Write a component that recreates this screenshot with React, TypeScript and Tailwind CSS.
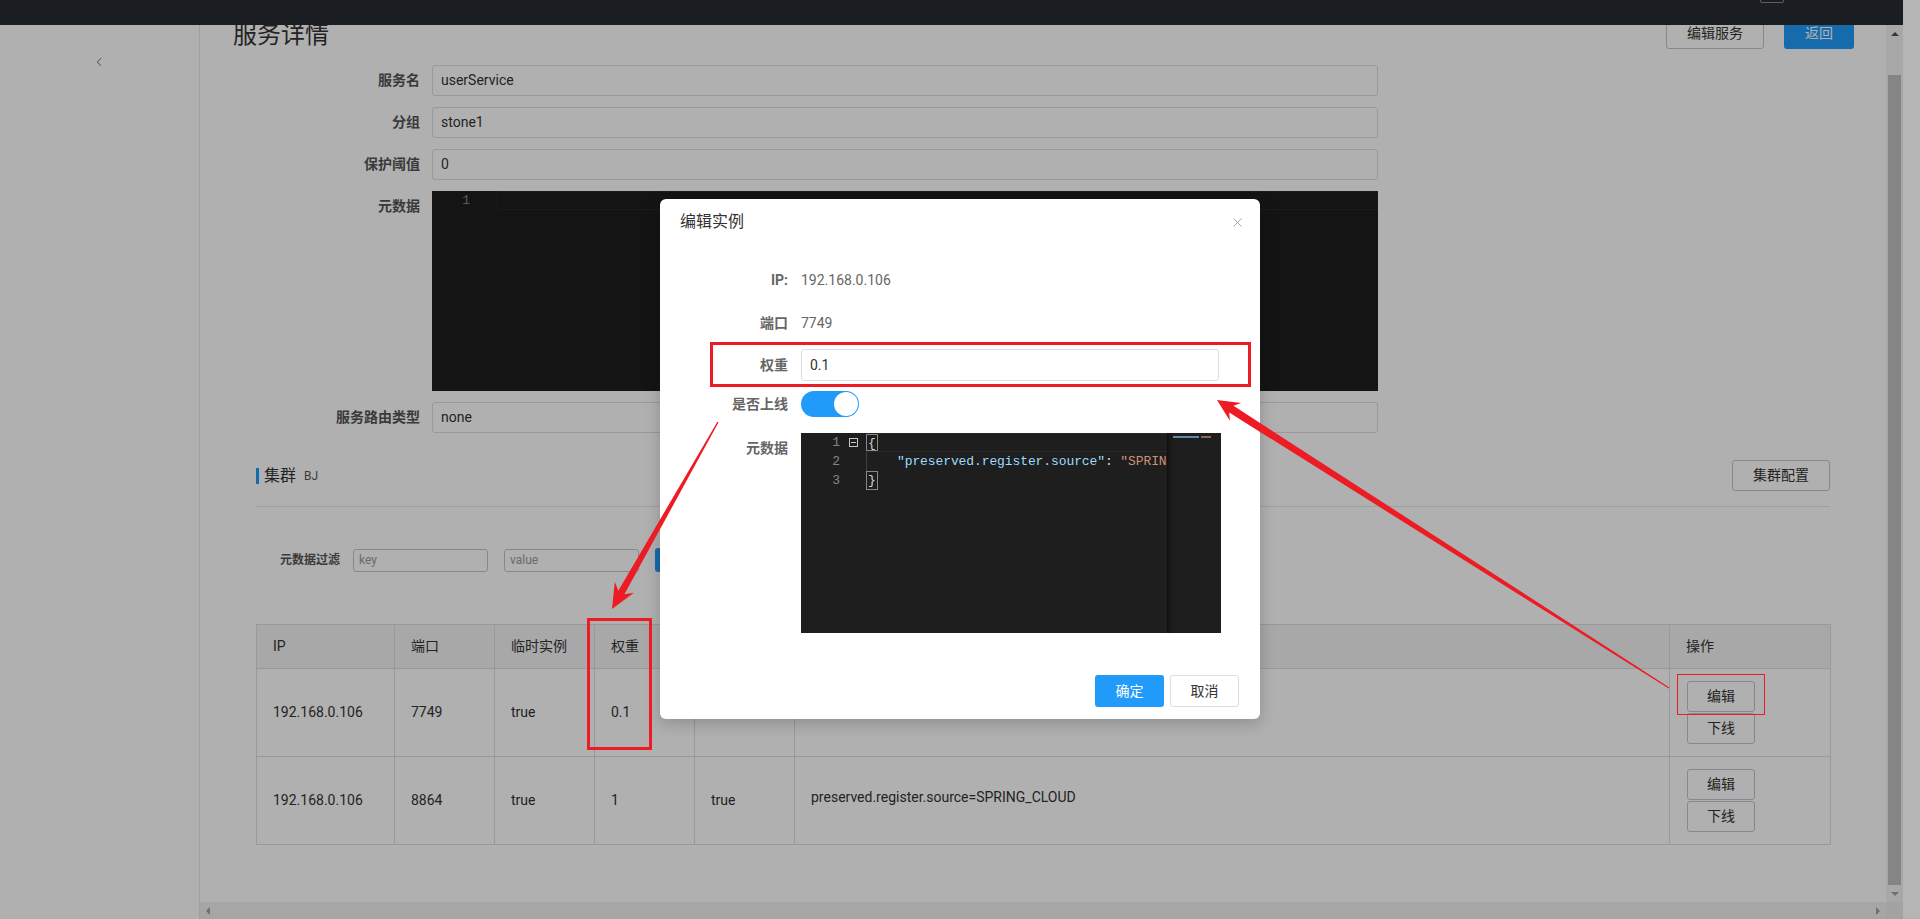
import { ChevronLeft, X } from 'lucide-react'

type Pt = [number, number]

// tapered red arrow like the ones drawn by screenshot tools
function arrowPoints(tail: Pt, tip: Pt, tailW: number, baseBack: number, baseW: number, wingBack: number, wingW: number) {
  const dx = tip[0] - tail[0]
  const dy = tip[1] - tail[1]
  const len = Math.hypot(dx, dy)
  const ux = dx / len
  const uy = dy / len
  const nx = -uy
  const ny = ux
  const at = (back: number, side: number): string =>
    `${(tip[0] - ux * back + nx * side).toFixed(1)},${(tip[1] - uy * back + ny * side).toFixed(1)}`
  return [
    at(len, tailW),
    at(baseBack, baseW),
    at(wingBack, wingW),
    `${tip[0]},${tip[1]}`,
    at(wingBack, -wingW),
    at(baseBack, -baseW),
    at(len, -tailW),
  ].join(' ')
}

const rows = [
  { ip: '192.168.0.106', port: '7749', eph: 'true', weight: '0.1', healthy: 'true', meta: 'preserved.register.source=SPRING_CLOUD' },
  { ip: '192.168.0.106', port: '8864', eph: 'true', weight: '1', healthy: 'true', meta: 'preserved.register.source=SPRING_CLOUD' },
]

function FormRow({ label, children, top = false }: { label: string; children: React.ReactNode; top?: boolean }) {
  return (
    <div className={`flex ${top ? 'items-start' : 'items-center'}`}>
      <label className="w-[164px] text-right text-[14px] leading-[31px] font-bold text-[#555]">{label}</label>
      <div className="ml-[12px]">{children}</div>
    </div>
  )
}

function TextBox({ value }: { value: string }) {
  return (
    <div className="w-[946px] h-[31px] border border-[#dcdee3] rounded-[3px] px-[8px] text-[14px] leading-[29px] text-[#333]">
      {value}
    </div>
  )
}

function ModalRow({ label, children, top = false }: { label: string; children: React.ReactNode; top?: boolean }) {
  return (
    <div className={`flex ${top ? 'items-start' : 'items-center h-[32px]'}`}>
      <span className="w-[128px] text-right text-[14px] leading-[30px] font-bold text-[#666]">{label}</span>
      <div className="ml-[13px]">{children}</div>
    </div>
  )
}

function CodeEditor() {
  return (
    <div className="relative w-[420px] h-[200px] bg-[#1e1e1e] overflow-hidden font-['Liberation_Mono',monospace] text-[13px] tracking-[-0.1px] leading-[19px]">
      <div className="flex">
        <div className="w-[39px] text-right text-[#858585]">
          <div>1</div>
          <div>2</div>
          <div>3</div>
        </div>
        <div className="w-[26px] flex justify-center pt-[5px]">
          <div className="w-[9px] h-[9px] border border-[#c5c5c5] flex items-center justify-center">
            <div className="w-[5px] h-px bg-[#c5c5c5]" />
          </div>
        </div>
        <div className="w-[301px] overflow-hidden whitespace-nowrap text-[#d4d4d4]">
          <div className="h-[19px] border-y border-[#282828] flex">
            <span className="border border-[#888] leading-[17px] px-px">{'{'}</span>
          </div>
          <div className="h-[19px] border-l border-[#404040] pl-[30px]">
            <span className="text-[#9cdcfe]">"preserved.register.source"</span>
            <span>: </span>
            <span className="text-[#ce9178]">"SPRING_CLOUD"</span>
          </div>
          <div className="h-[19px] flex">
            <span className="border border-[#888] leading-[17px] px-px">{'}'}</span>
          </div>
        </div>
        <div className="w-[54px] h-[200px] shadow-[inset_6px_0_6px_-6px_#000] pt-[3px] pl-[6px] flex gap-[2px] items-start">
          <div className="w-[26px] h-[2px] bg-[#5f8aa3]" />
          <div className="w-[10px] h-[2px] bg-[#8a6656]" />
        </div>
      </div>
    </div>
  )
}

function Modal() {
  return (
    <div className="absolute left-[660px] top-[199px] w-[600px] h-[520px] bg-white rounded-[6px] shadow-[0_4px_16px_rgba(0,0,0,0.2)] flex flex-col">
      <div className="h-[46px] flex items-center justify-between pl-[20px] pr-[15px]">
        <span className="text-[16px] text-[#333]">编辑实例</span>
        <X size={15} strokeWidth={1.4} className="text-[#999]" />
      </div>
      <div className="flex flex-col">
        <div className="mt-[19px]">
          <ModalRow label="IP:">
            <span className="text-[14px] text-[#666]">192.168.0.106</span>
          </ModalRow>
        </div>
        <div className="mt-[11px]">
          <ModalRow label="端口">
            <span className="text-[14px] text-[#666]">7749</span>
          </ModalRow>
        </div>
        <div className="mt-[10px]">
          <ModalRow label="权重">
            <div className="w-[418px] h-[32px] border border-[#dcdee3] rounded-[3px] px-[8px] text-[14px] leading-[30px] text-[#333]">0.1</div>
          </ModalRow>
        </div>
        <div className="mt-[7px]">
          <ModalRow label="是否上线">
            <div className="w-[58px] h-[26px] rounded-full bg-[#209bfa] flex justify-end items-center p-px">
              <div className="w-[24px] h-[24px] rounded-full bg-white" />
            </div>
          </ModalRow>
        </div>
        <div className="mt-[13px]">
          <ModalRow label="元数据" top>
            <CodeEditor />
          </ModalRow>
        </div>
      </div>
      <div className="mt-auto flex justify-end gap-[6px] pr-[21px] pb-[12px]">
        <button className="w-[69px] h-[32px] rounded-[3px] bg-[#209bfa] text-white text-[14px]">确定</button>
        <button className="w-[69px] h-[32px] rounded-[3px] border border-[#dcdee3] bg-white text-[#333] text-[14px]">取消</button>
      </div>
    </div>
  )
}

function Annotations() {
  return (
    <svg className="absolute inset-0 pointer-events-none" width="1920" height="919" viewBox="0 0 1920 919">
      <rect x="711.5" y="343.5" width="538" height="42" fill="none" stroke="#ed1c24" strokeWidth="3" />
      <rect x="588.5" y="619.5" width="62" height="129" fill="none" stroke="#ed1c24" strokeWidth="3" />
      <rect x="1677.5" y="674.5" width="87" height="40" fill="none" stroke="#ed1c24" strokeWidth="1" />
      <polygon points={arrowPoints([718, 422], [612, 609], 0.7, 19, 3.5, 25, 11)} fill="#ed1c24" />
      <polygon points={arrowPoints([1669, 688], [1217, 400], 0.6, 17, 4, 22, 10.5)} fill="#ed1c24" />
    </svg>
  )
}

export default function App() {
  return (
    <div className="relative w-[1920px] h-[919px] overflow-hidden flex bg-white font-[Roboto,'Noto_Sans_CJK_SC',sans-serif] text-[#333]">
      <div className="relative w-[1903px] h-full flex">
        <aside className="w-[200px] h-full shrink-0 border-r border-[#e6e6e6] bg-white">
          <div className="pt-[55px] pl-[92px] text-[#555]">
            <ChevronLeft size={14} strokeWidth={1.5} />
          </div>
        </aside>

        <div className="flex-1 flex flex-col min-w-0">
          <div className="flex flex-1 min-h-0">
            <main className="flex-1 min-w-0 pt-[17px]">
              <div className="flex items-center justify-between pl-[33px] pr-[32px] h-[32px]">
                <h1 className="text-[24px] leading-[32px] font-normal text-[#333] mt-[4px]">服务详情</h1>
                <div className="flex gap-[20px]">
                  <button className="w-[98px] h-[32px] border border-[#c4c6cf] rounded-[3px] bg-white text-[14px] text-[#333]">编辑服务</button>
                  <button className="w-[70px] h-[32px] rounded-[3px] bg-[#209bfa] text-[14px] text-white">返回</button>
                </div>
              </div>

              <div className="px-[56px]">
                <div className="mt-[16px] flex flex-col gap-[11px]">
                  <FormRow label="服务名"><TextBox value="userService" /></FormRow>
                  <FormRow label="分组"><TextBox value="stone1" /></FormRow>
                  <FormRow label="保护阈值"><TextBox value="0" /></FormRow>
                  <FormRow label="元数据" top>
                    <div className="w-[946px] h-[200px] bg-[#1e1e1e] flex font-['Liberation_Mono',monospace] text-[13px] leading-[17px]">
                      <div className="w-[38px] text-right text-[#858585] pt-px">1</div>
                      <div className="w-[27px]" />
                      <div className="flex-1 h-[19px] border border-[#282828]" />
                    </div>
                  </FormRow>
                  <FormRow label="服务路由类型"><TextBox value="none" /></FormRow>
                </div>

                <div className="mt-[27px] pb-[15px] border-b border-[#e6e6e6] flex items-center justify-between">
                  <div className="flex items-center">
                    <div className="w-[3px] h-[16px] bg-[#209bfa]" />
                    <span className="ml-[5px] text-[16px] text-[#333]">集群</span>
                    <span className="ml-[8px] text-[12px] text-[#555]">BJ</span>
                  </div>
                  <button className="w-[98px] h-[31px] border border-[#c4c6cf] rounded-[3px] bg-white text-[14px] text-[#333]">集群配置</button>
                </div>

                <div className="mt-[41px] pl-[24px] flex items-center gap-[16px]">
                  <span className="text-[12px] font-bold text-[#555] mr-[-3px]">元数据过滤</span>
                  <div className="w-[135px] h-[23px] border border-[#c4c6cf] rounded-[3px] px-[5px] text-[12px] leading-[21px] text-[#999]">key</div>
                  <div className="w-[135px] h-[23px] border border-[#c4c6cf] rounded-[3px] px-[5px] text-[12px] leading-[21px] text-[#999]">value</div>
                  <button className="w-[60px] h-[24px] rounded-[3px] bg-[#209bfa] text-[12px] text-white">查询</button>
                </div>

                <table className="mt-[52px] w-[1574px] table-fixed border-collapse text-[14px] text-[#333]">
                  <colgroup>
                    <col className="w-[138px]" />
                    <col className="w-[100px]" />
                    <col className="w-[100px]" />
                    <col className="w-[100px]" />
                    <col className="w-[100px]" />
                    <col className="w-[875px]" />
                    <col className="w-[161px]" />
                  </colgroup>
                  <thead>
                    <tr className="h-[44px] bg-[#f3f3f3]">
                      {['IP', '端口', '临时实例', '权重', '健康状态', '元数据', '操作'].map((h) => (
                        <th key={h} className="border border-[#dcdee3] px-[16px] text-left font-normal">{h}</th>
                      ))}
                    </tr>
                  </thead>
                  <tbody>
                    {rows.map((r) => (
                      <tr key={r.port} className="h-[88px]">
                        <td className="border border-[#dcdee3] px-[16px]">{r.ip}</td>
                        <td className="border border-[#dcdee3] px-[16px]">{r.port}</td>
                        <td className="border border-[#dcdee3] px-[16px]">{r.eph}</td>
                        <td className="border border-[#dcdee3] px-[16px]">{r.weight}</td>
                        <td className="border border-[#dcdee3] px-[16px]">{r.healthy}</td>
                        <td className="border border-[#dcdee3] px-[16px] pb-[6px]">{r.meta}</td>
                        <td className="border border-[#dcdee3] px-[17px]">
                          <div className="flex flex-col gap-px">
                            <button className="w-[68px] h-[31px] border border-[#c4c6cf] rounded-[3px] bg-white">编辑</button>
                            <button className="w-[68px] h-[31px] border border-[#c4c6cf] rounded-[3px] bg-white">下线</button>
                          </div>
                        </td>
                      </tr>
                    ))}
                  </tbody>
                </table>
              </div>
            </main>

            <div className="w-[17px] h-full bg-[#f3f3f3] flex flex-col items-center">
              <div className="h-[25px]" />
              <div className="h-[17px] flex items-center justify-center">
                <div className="w-0 h-0 border-x-[4px] border-x-transparent border-b-[4px] border-b-[#505050]" />
              </div>
              <div className="h-[33px]" />
              <div className="w-[13px] flex-1 bg-[#c1c1c1]" />
              <div className="h-[17px] flex items-center justify-center">
                <div className="w-0 h-0 border-x-[4px] border-x-transparent border-t-[4px] border-t-[#a3a3a3]" />
              </div>
            </div>
          </div>

          <div className="h-[17px] flex">
            <div className="flex-1 bg-[#f1f1f1] flex items-center justify-between px-[6px]">
              <div className="w-0 h-0 border-y-[4px] border-y-transparent border-r-[4px] border-r-[#a3a3a3]" />
              <div className="w-0 h-0 border-y-[4px] border-y-transparent border-l-[4px] border-l-[#a3a3a3]" />
            </div>
            <div className="w-[17px] bg-[#ececec]" />
          </div>
        </div>

        <header className="absolute top-0 left-0 w-full h-[25px] bg-[#262b32] overflow-hidden">
          <div className="absolute left-[1760px] top-[-12px] w-[24px] h-[15px] border border-[#868b92] rounded-[2px]" />
        </header>

        <div className="absolute inset-0 bg-black/[0.31]" />
      </div>
      <div className="w-[17px] h-full bg-[#b5b5b5]" />

      <Modal />
      <Annotations />
    </div>
  )
}
